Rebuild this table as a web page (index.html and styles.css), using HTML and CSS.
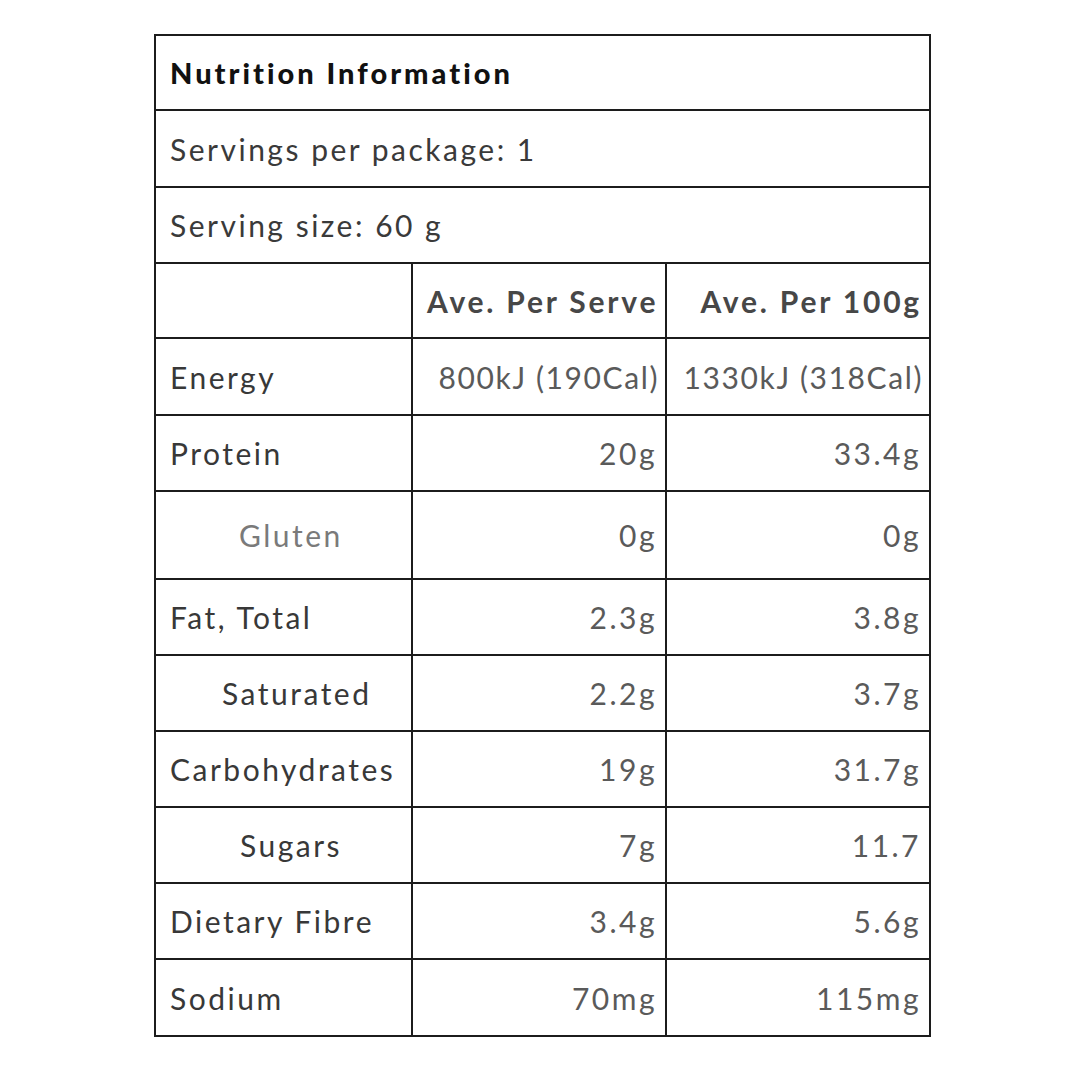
FILE: index.html
```html
<!DOCTYPE html>
<html>
<head>
<meta charset="utf-8">
<link rel="stylesheet" href="styles.css">
</head>
<body>
<main class="page">
  <table class="nutri">
    <colgroup>
      <col class="c1"><col class="c2"><col class="c3">
    </colgroup>
    <tr class="h75"><td colspan="3" class="title">Nutrition Information</td></tr>
    <tr class="h77"><td colspan="3" class="meta">Servings per package: 1</td></tr>
    <tr class="h76"><td colspan="3" class="meta">Serving size: 60 g</td></tr>
    <tr class="h75"><td></td><td class="head">Ave. Per Serve</td><td class="head">Ave. Per 100g</td></tr>
    <tr class="h77"><td class="label">Energy</td><td class="val tight">800kJ (190Cal)</td><td class="val tight">1330kJ (318Cal)</td></tr>
    <tr class="h76"><td class="label">Protein</td><td class="val">20g</td><td class="val">33.4g</td></tr>
    <tr class="h88"><td class="label gluten">Gluten</td><td class="val">0g</td><td class="val">0g</td></tr>
    <tr class="h76"><td class="label">Fat, Total</td><td class="val">2.3g</td><td class="val">3.8g</td></tr>
    <tr class="h76"><td class="label sat">Saturated</td><td class="val">2.2g</td><td class="val">3.7g</td></tr>
    <tr class="h76"><td class="label">Carbohydrates</td><td class="val">19g</td><td class="val">31.7g</td></tr>
    <tr class="h76"><td class="label sug">Sugars</td><td class="val">7g</td><td class="val">11.7</td></tr>
    <tr class="h76"><td class="label">Dietary Fibre</td><td class="val">3.4g</td><td class="val">5.6g</td></tr>
    <tr class="h77"><td class="label">Sodium</td><td class="val">70mg</td><td class="val">115mg</td></tr>
  </table>
</main>
</body>
</html>
```

FILE: styles.css
```css
html, body {
  margin: 0;
  padding: 0;
  background: #ffffff;
}
body {
  font-family: Lato, "Open Sans", "Liberation Sans", sans-serif;
  color: #333;
}
.page {
  padding: 34px 0 0 154px;
}
.nutri {
  border-collapse: collapse;
  width: 775px;
  table-layout: fixed;
  font-size: 30px;
  letter-spacing: 2.5px;
}
.c1 { width: 257px; }
.c2 { width: 254px; }
.c3 { width: 264px; }
.nutri td {
  border: 2px solid #1c1c1c;
  padding: 0 8px 0 14px;
  vertical-align: middle;
  white-space: nowrap;
  overflow: visible;
}
.h75 { height: 75px; }
.h76 { height: 76px; }
.h77 { height: 77px; }
.h88 { height: 88px; }
.nutri .title {
  font-weight: 900;
  color: #111;
  font-size: 29px;
  letter-spacing: 3px;
}
.nutri .meta { color: #3a3a3a; }
.nutri .head {
  font-weight: 700;
  color: #474747;
  text-align: right;
  letter-spacing: 2.8px;
  padding-right: 7px;
}
.nutri .label { color: #383838; }
.nutri .val {
  text-align: right;
  color: #5a5a5a;
}
.nutri .tight {
  padding-left: 0;
  padding-right: 6px;
  letter-spacing: 1.6px;
}
.nutri .gluten { padding-left: 83px; color: #7a7a7a; }
.nutri .sat { padding-left: 66px; }
.nutri .sug { padding-left: 84px; }
```
